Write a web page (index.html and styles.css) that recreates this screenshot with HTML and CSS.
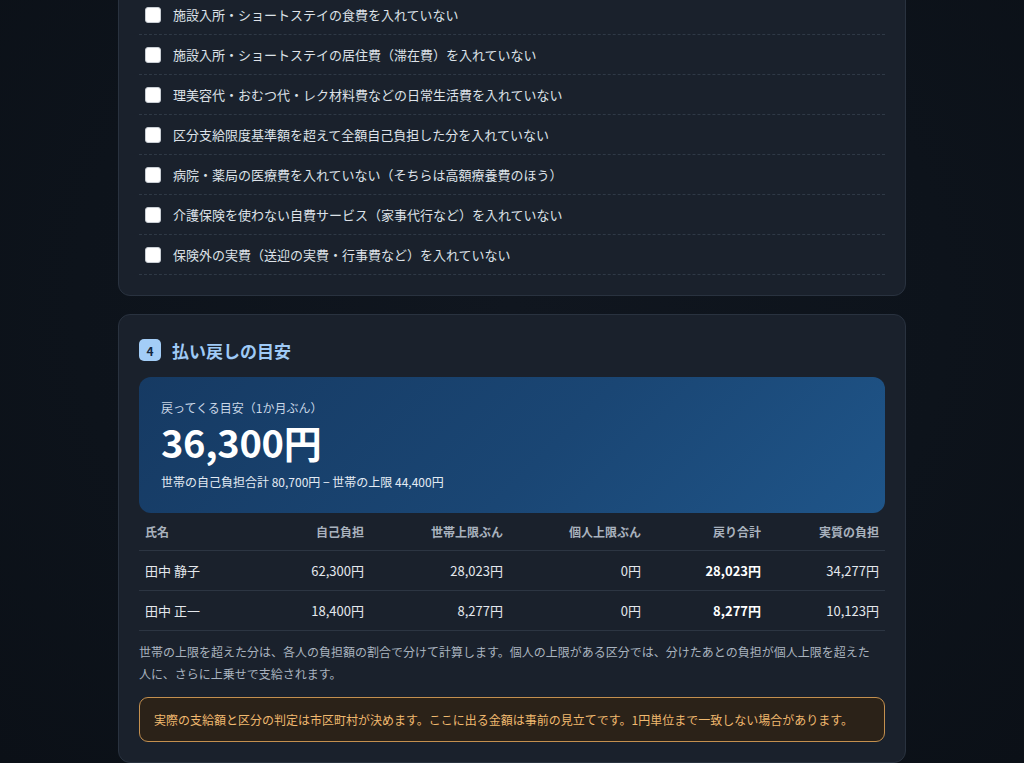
FILE: index.html
```
<!DOCTYPE html>
<html lang="ja">
<head>
<meta charset="utf-8">
<link rel="stylesheet" href="styles.css">
</head>
<body>
<main class="page">
  <section class="card card-first">
    <ul class="checklist">
      <li class="check-row"><span class="box"></span><span>施設入所・ショートステイの食費を入れていない</span></li>
      <li class="check-row"><span class="box"></span><span>施設入所・ショートステイの居住費（滞在費）を入れていない</span></li>
      <li class="check-row"><span class="box"></span><span>理美容代・おむつ代・レク材料費などの日常生活費を入れていない</span></li>
      <li class="check-row"><span class="box"></span><span>区分支給限度基準額を超えて全額自己負担した分を入れていない</span></li>
      <li class="check-row"><span class="box"></span><span>病院・薬局の医療費を入れていない（そちらは高額療養費のほう）</span></li>
      <li class="check-row"><span class="box"></span><span>介護保険を使わない自費サービス（家事代行など）を入れていない</span></li>
      <li class="check-row"><span class="box"></span><span>保険外の実費（送迎の実費・行事費など）を入れていない</span></li>
    </ul>
  </section>

  <section class="card">
    <h2 class="card-title"><span class="badge">4</span>払い戻しの目安</h2>
    <div class="hero">
      <div class="hero-label">戻ってくる目安（1か月ぶん）</div>
      <div class="hero-amount">36,300円</div>
      <div class="hero-sub">世帯の自己負担合計 80,700円 − 世帯の上限 44,400円</div>
    </div>
    <table class="result">
      <colgroup>
        <col class="c1"><col class="c2"><col class="c3"><col class="c4"><col class="c5"><col class="c6">
      </colgroup>
      <thead>
        <tr><th class="left">氏名</th><th>自己負担</th><th>世帯上限ぶん</th><th>個人上限ぶん</th><th>戻り合計</th><th>実質の負担</th></tr>
      </thead>
      <tbody>
        <tr><td class="left">田中 静子</td><td>62,300円</td><td>28,023円</td><td>0円</td><td class="strong">28,023円</td><td>34,277円</td></tr>
        <tr><td class="left">田中 正一</td><td>18,400円</td><td>8,277円</td><td>0円</td><td class="strong">8,277円</td><td>10,123円</td></tr>
      </tbody>
    </table>
    <p class="note">世帯の上限を超えた分は、各人の負担額の割合で分けて計算します。個人の上限がある区分では、分けたあとの負担が個人上限を超えた人に、さらに上乗せで支給されます。</p>
    <div class="warn">実際の支給額と区分の判定は市区町村が決めます。ここに出る金額は事前の見立てです。1円単位まで一致しない場合があります。</div>
  </section>
</main>
</body>
</html>
```
FILE: styles.css
```
* { box-sizing: border-box; }
html, body { margin: 0; padding: 0; }
body {
  background: radial-gradient(ellipse at 50% 40%, #10161f 0%, #0d131b 60%, #0b1017 100%);
  background-color: #0d131b;
  font-family: "Noto Sans CJK JP", "Noto Sans", sans-serif;
  color: #e2e7ed;
  height: 763px;
  overflow: hidden;
}
.page {
  width: 788px;
  margin: -26px auto 0;
  display: flex;
  flex-direction: column;
  gap: 18px;
}
.card {
  background: #1a212c;
  border: 1px solid #29323f;
  border-radius: 12px;
  padding: 20px;
}
.checklist { list-style: none; margin: 0; padding: 0; }
.check-row {
  height: 40px;
  display: flex;
  align-items: center;
  gap: 12px;
  padding: 0 6px;
  border-bottom: 1px dashed #2f3946;
  font-size: 13px;
  color: #dde2e8;
}
.box {
  width: 16px; height: 16px;
  flex: none;
  background: #ffffff;
  border: 1px solid #c9ced4;
  border-radius: 3px;
}
.card-title {
  margin: 0 0 12px;
  height: 30px;
  display: flex;
  align-items: center;
  gap: 11px;
  font-size: 17px;
  font-weight: 700;
  color: #9fcaf6;
}
.badge {
  width: 22px; height: 22px;
  border-radius: 5px;
  background: #a3cdf7;
  color: #13263d;
  font-size: 12px;
  font-weight: 700;
  display: flex; align-items: center; justify-content: center;
}
.hero {
  border-radius: 12px;
  padding: 22px 22px;
  background: linear-gradient(135deg, #163a63 0%, #1a4674 55%, #1f5589 100%);
}
.hero-label { font-size: 12px; line-height: 18px; color: #c9d7e6; }
.hero-amount {
  margin-top: 4px;
  font-size: 38px; line-height: 42px; font-weight: 700; color: #ffffff;
  letter-spacing: -0.3px;
}
.hero-sub { margin-top: 10px; font-size: 12px; line-height: 18px; color: #e3ebf4; }
.result {
  width: 100%;
  border-collapse: collapse;
  table-layout: fixed;
}
.c1 { width: 92px; } .c2 { width: 139px; } .c3 { width: 139px; }
.c4 { width: 138px; } .c5 { width: 120px; } .c6 { width: 118px; }
.result th, .result td { padding: 0 6px; text-align: right; }
.result .left { text-align: left; }
.result th {
  height: 37px;
  font-size: 12px; font-weight: 700; color: #a9b2be;
  border-bottom: 1px solid #2c3542;
}
.result td {
  height: 40px;
  font-size: 13px; color: #e4e8ed;
  border-bottom: 1px solid #2c3542;
}
.result td.strong { font-weight: 700; color: #ffffff; }
.note {
  margin: 10px 0 12px;
  padding-right: 6px;
  font-size: 12px; line-height: 22px; color: #a9b3bf;
}
.warn {
  border: 1px solid #c4904f;
  background: #2b2218;
  border-radius: 9px;
  padding: 13px 14px;
  font-size: 12px; line-height: 17px;
  color: #f0b96f;
}
```
